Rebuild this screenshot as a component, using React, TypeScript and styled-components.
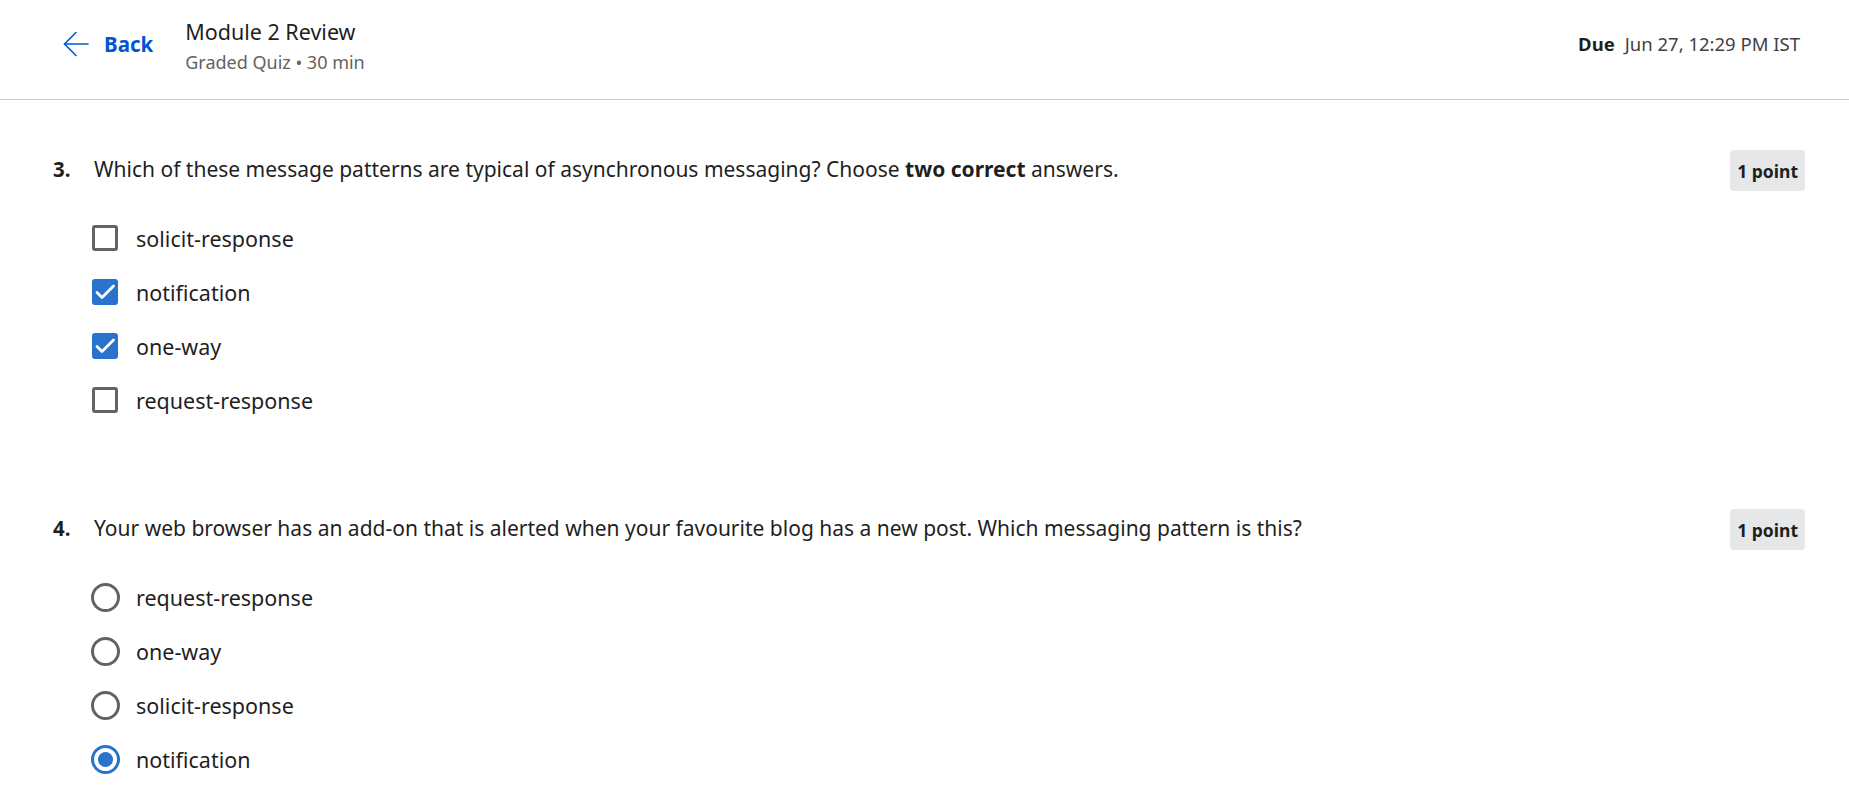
import React from "react";
import styled, { createGlobalStyle } from "styled-components";

const GlobalStyle = createGlobalStyle`
  html, body {
    margin: 0;
    padding: 0;
    background: #ffffff;
    font-family: "Noto Sans", "Open Sans", "Liberation Sans", sans-serif;
    color: #1f1f1f;
  }
  * { box-sizing: border-box; }
`;

const Page = styled.div`
  width: 100%;
  min-height: 799px;
  background: #fff;
`;

const Header = styled.header`
  height: 100px;
  border-bottom: 1px solid #c9c9c9;
  display: flex;
  align-items: center;
  justify-content: space-between;
  padding: 0 49px 0 63px;
`;

const HeaderLeft = styled.div`
  display: flex;
  align-items: center;
`;

const BackButton = styled.button`
  display: flex;
  align-items: center;
  gap: 15px;
  background: none;
  border: none;
  padding: 0;
  margin: -12px 32px 0 0;
  cursor: pointer;
  color: #0056d2;
  font-family: inherit;
  font-size: 20.5px;
  font-weight: 700;
`;

const TitleBlock = styled.div`
  display: flex;
  flex-direction: column;
  gap: 6px;
  margin-top: -8px;
`;

const Title = styled.div`
  font-size: 21.5px;
  line-height: 26px;
  color: #1f1f1f;
`;

const Subtitle = styled.div`
  font-size: 18px;
  line-height: 22px;
  color: #636363;
`;

const Due = styled.div`
  font-size: 18.5px;
  color: #424242;
  margin-top: -12px;
  b {
    color: #1f1f1f;
    font-weight: 700;
    margin-right: 10px;
  }
`;

const Content = styled.main`
  padding: 50px 44px 0 53px;
  display: flex;
  flex-direction: column;
  gap: 95px;
`;

const Question = styled.section`
  display: flex;
  flex-direction: column;
  gap: 33px;
`;

const QuestionRow = styled.div`
  display: flex;
  align-items: center;
  min-height: 41px;
`;

const QNumber = styled.span`
  width: 41px;
  font-size: 20.5px;
  font-weight: 700;
  flex-shrink: 0;
  margin-top: -4px;
`;

const QText = styled.div`
  flex: 1;
  font-size: 21px;
  line-height: 26px;
  color: #1f1f1f;
  margin-top: -4px;
  b { font-weight: 700; }
`;

const Badge = styled.span`
  background: #e5e7e8;
  border-radius: 4px;
  padding: 0 7px;
  height: 41px;
  display: inline-flex;
  align-items: center;
  font-size: 17.5px;
  font-weight: 700;
  color: #1f1f1f;
`;

const Options = styled.div`
  display: flex;
  flex-direction: column;
  gap: 26px;
  padding-left: 39px;
`;

const Option = styled.label`
  display: flex;
  align-items: center;
  gap: 16px;
  height: 28px;
  font-size: 21.5px;
  color: #1f1f1f;
`;

const ControlBox = styled.span`
  width: 28px;
  height: 28px;
  display: flex;
  align-items: center;
  justify-content: flex-start;
  flex-shrink: 0;
`;

const CheckBox = styled.span<{ $checked: boolean }>`
  width: 26px;
  height: 26px;
  border-radius: 3px;
  border: ${(p) => (p.$checked ? "none" : "3px solid #636363")};
  background: ${(p) => (p.$checked ? "#2a73cc" : "#fff")};
  display: flex;
  align-items: center;
  justify-content: center;
`;

const Radio = styled.span<{ $checked: boolean }>`
  width: 29px;
  height: 29px;
  border-radius: 50%;
  border: 3px solid ${(p) => (p.$checked ? "#2a73cc" : "#636363")};
  display: flex;
  align-items: center;
  justify-content: center;
  margin-left: -1px;
  &::after {
    content: "";
    width: 15px;
    height: 15px;
    border-radius: 50%;
    background: #2a73cc;
    display: ${(p) => (p.$checked ? "block" : "none")};
  }
`;

const ArrowIcon = () => (
  <svg width="26" height="26" viewBox="0 0 26 26" fill="none" stroke="#0056d2" strokeWidth="1.6" strokeLinecap="round" strokeLinejoin="round">
    <path d="M25 13H1.5" />
    <path d="M13 1.5L1.5 13L13 24.5" />
  </svg>
);

const CheckIcon = () => (
  <svg width="26" height="26" viewBox="0 0 26 26" fill="none" stroke="#fff" strokeWidth="2.8" strokeLinecap="round" strokeLinejoin="round">
    <path d="M5 13.5L10 18.5L21.5 7" />
  </svg>
);

const q3 = [
  { label: "solicit-response", checked: false },
  { label: "notification", checked: true },
  { label: "one-way", checked: true },
  { label: "request-response", checked: false },
];

const q4 = [
  { label: "request-response", checked: false },
  { label: "one-way", checked: false },
  { label: "solicit-response", checked: false },
  { label: "notification", checked: true },
];

export default function App() {
  return (
    <Page>
      <GlobalStyle />
      <Header>
        <HeaderLeft>
          <BackButton>
            <ArrowIcon />
            Back
          </BackButton>
          <TitleBlock>
            <Title>Module 2 Review</Title>
            <Subtitle>Graded Quiz • 30 min</Subtitle>
          </TitleBlock>
        </HeaderLeft>
        <Due>
          <b>Due</b>Jun 27, 12:29 PM IST
        </Due>
      </Header>
      <Content>
        <Question>
          <QuestionRow>
            <QNumber>3.</QNumber>
            <QText>
              Which of these message patterns are typical of asynchronous messaging? Choose <b>two correct</b> answers.
            </QText>
            <Badge>1 point</Badge>
          </QuestionRow>
          <Options>
            {q3.map((o) => (
              <Option key={o.label}>
                <ControlBox>
                  <CheckBox $checked={o.checked}>{o.checked && <CheckIcon />}</CheckBox>
                </ControlBox>
                {o.label}
              </Option>
            ))}
          </Options>
        </Question>
        <Question>
          <QuestionRow>
            <QNumber>4.</QNumber>
            <QText>
              Your web browser has an add-on that is alerted when your favourite blog has a new post. Which messaging pattern is this?
            </QText>
            <Badge>1 point</Badge>
          </QuestionRow>
          <Options>
            {q4.map((o) => (
              <Option key={o.label}>
                <ControlBox>
                  <Radio $checked={o.checked} />
                </ControlBox>
                {o.label}
              </Option>
            ))}
          </Options>
        </Question>
      </Content>
    </Page>
  );
}
